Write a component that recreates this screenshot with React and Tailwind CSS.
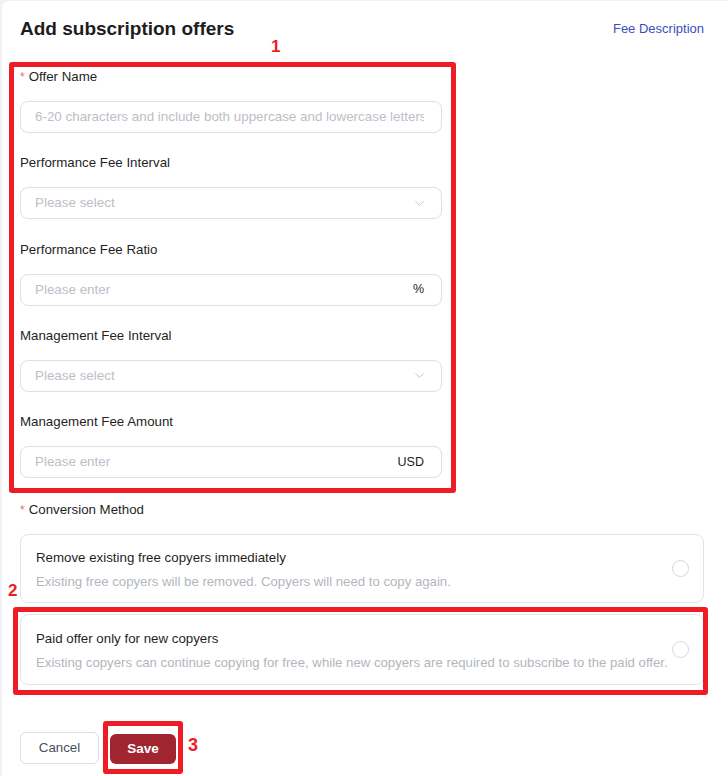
import { ChevronDown } from 'lucide-react'

const fields = [
  { label: 'Offer Name', required: true, placeholder: '6-20 characters and include both uppercase and lowercase letters and numbers', type: 'input' },
  { label: 'Performance Fee Interval', placeholder: 'Please select', type: 'select' },
  { label: 'Performance Fee Ratio', placeholder: 'Please enter', type: 'input', suffix: '%' },
  { label: 'Management Fee Interval', placeholder: 'Please select', type: 'select' },
  { label: 'Management Fee Amount', placeholder: 'Please enter', type: 'input', suffix: 'USD' }
]

function Label({ text, required }) {
  return (
    <div className="h-[21px] pt-[1px] leading-[20px] text-[13.3px] text-[#1f1f1f] mb-[14px] flex items-center">
      {required && <span className="text-[#f56c6c] mr-[4px] text-[12px]">*</span>}
      {text}
    </div>
  )
}

function Field({ field }) {
  return (
    <div>
      <Label text={field.label} required={field.required} />
      <div className="h-[32px] border border-[#dcdfe6] rounded-[8px] flex items-center pl-[14px] pr-[17px] bg-white">
        <input
          className="flex-1 min-w-0 outline-none bg-transparent text-[13.4px] text-[#333] placeholder:text-[#bcc0c8]"
          placeholder={field.placeholder}
          readOnly
        />
        {field.suffix && <span className="text-[12.5px] text-[#222] ml-2">{field.suffix}</span>}
        {field.type === 'select' && <ChevronDown size={15} strokeWidth={1.3} className="text-[#b6b9c0] -mr-[3px]" />}
      </div>
    </div>
  )
}

function Option({ title, desc, h }) {
  return (
    <div className={`border border-[#e2e4ea] rounded-[8px] bg-white pl-[15px] pr-[14px] pt-[3px] flex items-center ${h}`}>
      <div className="flex-1 min-w-0 whitespace-nowrap">
        <div className="leading-[20px] text-[13.3px] text-[#1f1f1f]">{title}</div>
        <div className="leading-[20px] text-[13.2px] text-[#b3b6bd] mt-[4px]">{desc}</div>
      </div>
      <span className="w-[17px] h-[17px] rounded-full border border-[#d5d7dd] bg-white shrink-0 -mt-[3px]" />
    </div>
  )
}

export default function App() {
  return (
    <div className="min-h-screen bg-[#f1f2f5] pl-[2px] pt-[1px]" style={{ fontFamily: '"Liberation Sans", Arial, sans-serif' }}>
      <div className="min-h-[775px] bg-white rounded-tl-[6px] pl-[18px] pr-[24px] pt-[16px] pb-[12px]">
        <div className="flex items-center justify-between h-[24px]">
          <h2 className="text-[19px] font-bold text-[#1d1d1f]">Add subscription offers</h2>
          <span className="text-[13px] text-[#3a4ec2]">Fee Description</span>
        </div>

        <div className="relative w-[422px] mt-[25px] flex flex-col gap-[19.3px]">
          <span className="absolute -top-[4px] -left-[11px] -right-[14px] -bottom-[15px] border-[5px] border-[#ee1c25] rounded-[3px] pointer-events-none" />
          <span className="absolute -top-[29px] left-[251px] text-[17px] font-bold leading-[20px] text-[#ee1c25]">1</span>
          {fields.map(f => (
            <Field key={f.label} field={f} />
          ))}
        </div>

        <div className="mt-[21px]">
          <Label text="Conversion Method" required />
        </div>

        <div className="flex flex-col gap-[11px]">
          <Option
            h="h-[69px]"
            title="Remove existing free copyers immediately"
            desc="Existing free copyers will be removed. Copyers will need to copy again."
          />
          <div className="relative">
            <span className="absolute -top-[7px] -left-[7px] -right-[4px] -bottom-[10px] border-[5px] border-[#ee1c25] rounded-[3px] pointer-events-none" />
            <span className="absolute -top-[33px] -left-[12px] text-[17px] font-bold leading-[20px] text-[#ee1c25]">2</span>
            <Option
              h="h-[71px]"
              title="Paid offer only for new copyers"
              desc="Existing copyers can continue copying for free, while new copyers are required to subscribe to the paid offer."
            />
          </div>
        </div>

        <div className="flex items-center gap-[11px] mt-[47px]">
          <button className="h-[32px] w-[79px] border border-[#dcdfe6] rounded-[6px] text-[13.3px] text-[#4a5060] bg-white">
            Cancel
          </button>
          <div className="relative">
            <span className="absolute -top-[12px] -left-[7px] -right-[7px] -bottom-[10px] border-[5px] border-[#ee1c25] rounded-[3px] pointer-events-none" />
            <span className="absolute top-[2px] left-[78px] text-[18px] font-bold leading-[20px] text-[#ee1c25]">3</span>
            <button className="h-[30px] w-[66px] mt-[1px] rounded-[6px] bg-[#a12530] text-white text-[13.5px] font-bold block">
              Save
            </button>
          </div>
        </div>
      </div>
    </div>
  )
}
